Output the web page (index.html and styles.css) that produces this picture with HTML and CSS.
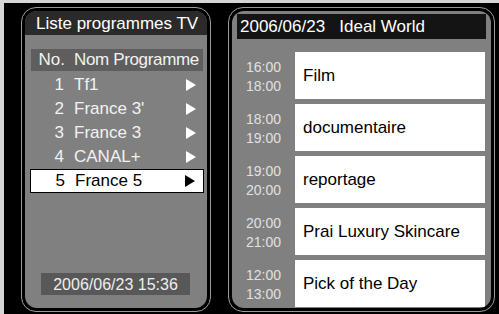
FILE: index.html
```html
<!DOCTYPE html>
<html>
<head>
<meta charset="utf-8">
<link rel="stylesheet" href="styles.css">
</head>
<body>
<div class="screen">
  <div class="panel panel-left">
    <div class="inner inner-left">
      <div class="title">Liste programmes TV</div>
      <div class="list">
        <div class="row head"><span class="num">No.</span><span class="name">Nom Programme</span><span></span></div>
        <div class="row"><span class="num">1</span><span class="name">Tf1</span><span class="arrow"></span></div>
        <div class="row"><span class="num">2</span><span class="name">France 3'</span><span class="arrow"></span></div>
        <div class="row"><span class="num">3</span><span class="name">France 3</span><span class="arrow"></span></div>
        <div class="row"><span class="num">4</span><span class="name">CANAL+</span><span class="arrow"></span></div>
        <div class="row sel"><span class="num">5</span><span class="name">France 5</span><span class="arrow"></span></div>
      </div>
      <div class="clock">2006/06/23 15:36</div>
    </div>
  </div>
  <div class="panel panel-right">
    <div class="inner inner-right">
      <div class="bar">2006/06/23&nbsp;&nbsp; Ideal World</div>
      <div class="guide">
        <div class="entry"><div class="time">16:00<br>18:00</div><div class="prog">Film</div></div>
        <div class="entry"><div class="time">18:00<br>19:00</div><div class="prog">documentaire</div></div>
        <div class="entry"><div class="time">19:00<br>20:00</div><div class="prog">reportage</div></div>
        <div class="entry"><div class="time">20:00<br>21:00</div><div class="prog">Prai Luxury Skincare</div></div>
        <div class="entry"><div class="time">12:00<br>13:00</div><div class="prog">Pick of the Day</div></div>
      </div>
    </div>
  </div>
</div>
</body>
</html>
```

FILE: styles.css
```css
* { box-sizing: border-box; }
html, body { margin: 0; padding: 0; background: #000; }
body { font-family: "Liberation Sans", Arial, sans-serif; }

.screen {
  width: 499px;
  height: 314px;
  background: #000;
  border-top: 3px solid #d6d6d6;
  border-left: 4px solid #d6d6d6;
  padding: 4px 0 2px 17px;
  display: flex;
  gap: 17px;
  overflow: hidden;
}

.panel {
  border: 1px solid #9a9a9a;
  border-radius: 15px;
  padding: 3px;
  height: 305px;
  background: #000;
}
.panel-left { width: 190px; }
.panel-right { width: 267px; }

.inner {
  height: 100%;
  background: #808080;
  border-radius: 12px;
  overflow: hidden;
  display: flex;
  flex-direction: column;
}

.title {
  height: 24px;
  line-height: 25px;
  background: #2a2a2a;
  color: #fff;
  font-size: 17px;
  padding-left: 11px;
  white-space: nowrap;
}

.list {
  margin: 14px 3px 0 5px;
  display: flex;
  flex-direction: column;
}

.row {
  display: grid;
  grid-template-columns: 34px 1fr 18px;
  column-gap: 10px;
  align-items: center;
  height: 24px;
  color: #f2f2f2;
  font-size: 17px;
}
.row.head {
  height: 22px;
  background: #5e5e5e;
  margin: 0 1px 2px 1px;
  grid-template-columns: 34px 1fr 0;
  column-gap: 9px;
}
.row.head .name { letter-spacing: -0.35px; }
.num { text-align: right; white-space: nowrap; }
.name { white-space: nowrap; }
.arrow {
  width: 0;
  height: 0;
  border-left: 10px solid #fff;
  border-top: 6px solid transparent;
  border-bottom: 6px solid transparent;
}
.row.sel {
  background: #fff;
  color: #000;
  border: 1px solid #000;
}
.row.sel .arrow { border-left-color: #000; }

.clock {
  margin: auto 17px 13px 16px;
  height: 22px;
  line-height: 23px;
  background: #585858;
  color: #eee;
  font-size: 16px;
  text-align: center;
}

.bar {
  margin: 3px 5px 0 5px;
  height: 25px;
  line-height: 26px;
  background: #141414;
  color: #fff;
  font-size: 17px;
  padding-left: 3px;
  white-space: nowrap;
}

.guide {
  margin-top: 13px;
  display: flex;
  flex-direction: column;
  gap: 5px;
}
.entry {
  display: flex;
  height: 47px;
}
.time {
  width: 63px;
  color: #e0e0e0;
  font-size: 14px;
  line-height: 19px;
  text-align: center;
  display: flex;
  align-items: center;
  justify-content: center;
  padding-top: 2px;
}
.prog {
  width: 190px;
  background: #fff;
  color: #000;
  font-size: 17px;
  padding-left: 8px;
  display: flex;
  align-items: center;
  white-space: nowrap;
}
```
